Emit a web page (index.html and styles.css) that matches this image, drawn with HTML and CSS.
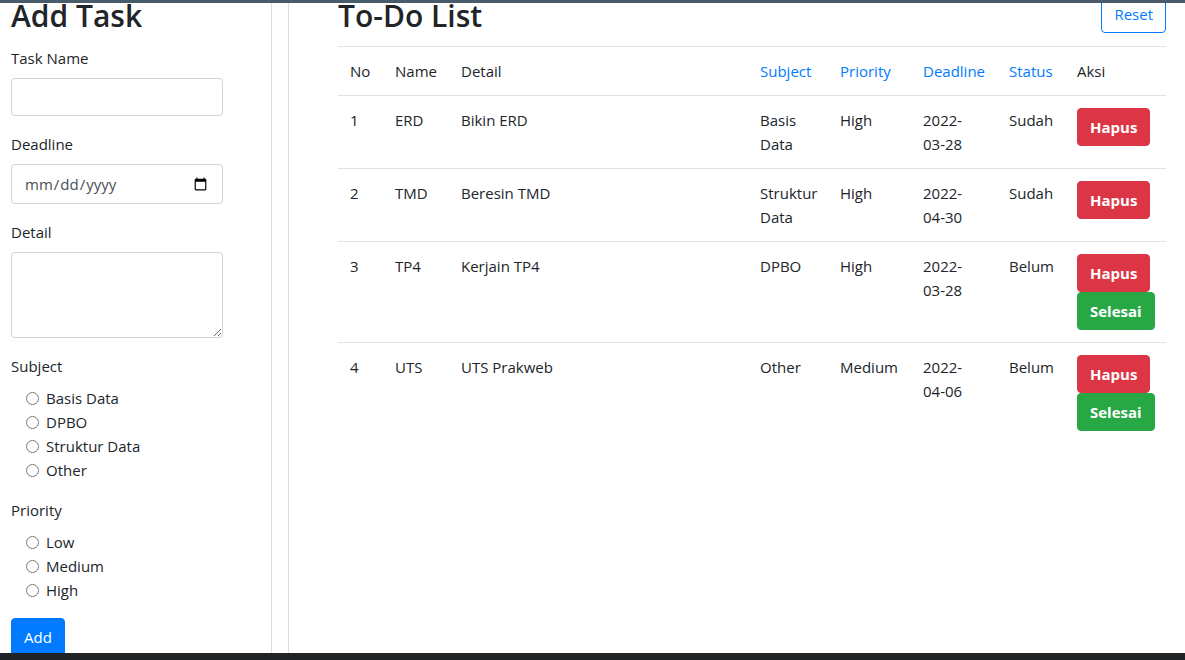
FILE: index.html
```html
<!DOCTYPE html>
<html lang="id">
<head>
<meta charset="utf-8">
<title>To-Do List</title>
<link rel="stylesheet" href="styles.css">
</head>
<body>
<div class="topbar"></div>
<div class="page">
  <aside class="sidebar">
    <h2 class="title">Add Task</h2>
    <form class="task-form">
      <div class="form-group">
        <label class="label" for="name">Task Name</label>
        <input class="control" id="name" type="text">
      </div>
      <div class="form-group">
        <label class="label" for="deadline">Deadline</label>
        <input class="control date" id="deadline" type="date">
      </div>
      <div class="form-group">
        <label class="label" for="detail">Detail</label>
        <textarea class="control area" id="detail" rows="3"></textarea>
      </div>
      <div class="form-group">
        <div class="label">Subject</div>
        <div class="radios">
          <label class="check"><input type="radio" name="subject"><span>Basis Data</span></label>
          <label class="check"><input type="radio" name="subject"><span>DPBO</span></label>
          <label class="check"><input type="radio" name="subject"><span>Struktur Data</span></label>
          <label class="check"><input type="radio" name="subject"><span>Other</span></label>
        </div>
      </div>
      <div class="form-group">
        <div class="label">Priority</div>
        <div class="radios">
          <label class="check"><input type="radio" name="priority"><span>Low</span></label>
          <label class="check"><input type="radio" name="priority"><span>Medium</span></label>
          <label class="check"><input type="radio" name="priority"><span>High</span></label>
        </div>
      </div>
      <button type="button" class="btn btn-primary">Add</button>
    </form>
  </aside>
  <div class="spacer"></div>
  <main class="main">
    <div class="main-head">
      <h2 class="title">To-Do List</h2>
      <button type="button" class="btn btn-outline">Reset</button>
    </div>
    <table class="table">
      <colgroup>
        <col class="c-no"><col class="c-name"><col class="c-detail"><col class="c-subject">
        <col class="c-priority"><col class="c-deadline"><col class="c-status"><col class="c-aksi">
      </colgroup>
      <thead>
        <tr>
          <th>No</th><th>Name</th><th>Detail</th>
          <th class="link">Subject</th><th class="link">Priority</th><th class="link">Deadline</th><th class="link">Status</th>
          <th>Aksi</th>
        </tr>
      </thead>
      <tbody>
        <tr>
          <td>1</td><td>ERD</td><td>Bikin ERD</td><td>Basis Data</td><td>High</td><td class="date-cell">2022-03-28</td><td>Sudah</td>
          <td><div class="actions"><button type="button" class="btn btn-danger">Hapus</button></div></td>
        </tr>
        <tr>
          <td>2</td><td>TMD</td><td>Beresin TMD</td><td>Struktur Data</td><td>High</td><td class="date-cell">2022-04-30</td><td>Sudah</td>
          <td><div class="actions"><button type="button" class="btn btn-danger">Hapus</button></div></td>
        </tr>
        <tr>
          <td>3</td><td>TP4</td><td>Kerjain TP4</td><td>DPBO</td><td>High</td><td class="date-cell">2022-03-28</td><td>Belum</td>
          <td><div class="actions"><button type="button" class="btn btn-danger">Hapus</button><button type="button" class="btn btn-success">Selesai</button></div></td>
        </tr>
        <tr>
          <td>4</td><td>UTS</td><td>UTS Prakweb</td><td>Other</td><td>Medium</td><td class="date-cell">2022-04-06</td><td>Belum</td>
          <td><div class="actions"><button type="button" class="btn btn-danger">Hapus</button><button type="button" class="btn btn-success">Selesai</button></div></td>
        </tr>
      </tbody>
    </table>
  </main>
</div>
<div class="taskbar"></div>
</body>
</html>
```
FILE: styles.css
```css
* { box-sizing: border-box; }
html, body { margin: 0; padding: 0; }
body {
  font-family: "Open Sans", "Noto Sans", sans-serif;
  font-size: 15px;
  line-height: 24px;
  color: #212529;
  background: #fff;
  overflow: hidden;
}
.topbar {
  position: fixed;
  top: 0; left: 0; right: 0;
  height: 3px;
  background: #485c69;
  z-index: 10;
}
.taskbar {
  position: fixed;
  bottom: 0; left: 0; right: 0;
  height: 7px;
  background: #1f2326;
  z-index: 10;
}
.page {
  display: flex;
  min-height: 100vh;
}
.sidebar {
  width: 272px;
  flex: none;
  padding-left: 11px;
  border-right: 1px solid #dedede;
}
.spacer { width: 16px; flex: none; }
.main {
  flex: 1;
  border-left: 1px solid #dedede;
  padding: 0 19px 0 49px;
}
.title {
  margin: 0 0 14px;
  font-size: 30px;
  line-height: 32px;
  font-weight: 600;
  color: #212529;
}
.task-form { width: 212px; }
.form-group { margin-bottom: 16px; }
.label { display: block; margin-bottom: 8px; }
.control {
  display: block;
  width: 212px;
  height: 38px;
  padding: 6px 12px;
  font: inherit;
  color: #495057;
  border: 1px solid #ced4da;
  border-radius: 4px;
  background: #fff;
}
.control.date { height: 40px; }
.control.area { height: 86px; resize: vertical; }
.radios { padding-left: 15px; }
.check {
  display: flex;
  align-items: center;
  height: 24px;
}
.check input {
  margin: 0 7px 0 0;
  width: 13px;
  height: 13px;
  flex: none;
}
.btn {
  display: inline-block;
  font: inherit;
  line-height: 24px;
  padding: 6px 12px;
  border: 1px solid transparent;
  border-radius: 4px;
  cursor: pointer;
}
.btn-primary { background: #007bff; color: #fff; border-color: #007bff; }
.btn-outline { background: #fff; color: #007bff; border-color: #007bff; margin-top: -5px; }
.btn-danger { background: #dc3545; color: #fff; border-color: #dc3545; font-weight: 700; }
.btn-success { background: #28a745; color: #fff; border-color: #28a745; font-weight: 700; }
.main-head {
  display: flex;
  justify-content: space-between;
  align-items: flex-start;
}
.table {
  width: 100%;
  border-collapse: collapse;
  table-layout: fixed;
}
.table th, .table td {
  padding: 12px;
  border-top: 1px solid #dee2e6;
  text-align: left;
  vertical-align: top;
  font-weight: 400;
}
.table td.date-cell { padding-right: 26px; }
.table th.link { color: #007bff; }
.c-no { width: 45px; }
.c-name { width: 66px; }
.c-detail { width: 299px; }
.c-subject { width: 80px; }
.c-priority { width: 83px; }
.c-deadline { width: 86px; }
.c-status { width: 68px; }
.c-aksi { width: 101px; }
.actions {
  display: flex;
  flex-direction: column;
  align-items: flex-start;
}
```
